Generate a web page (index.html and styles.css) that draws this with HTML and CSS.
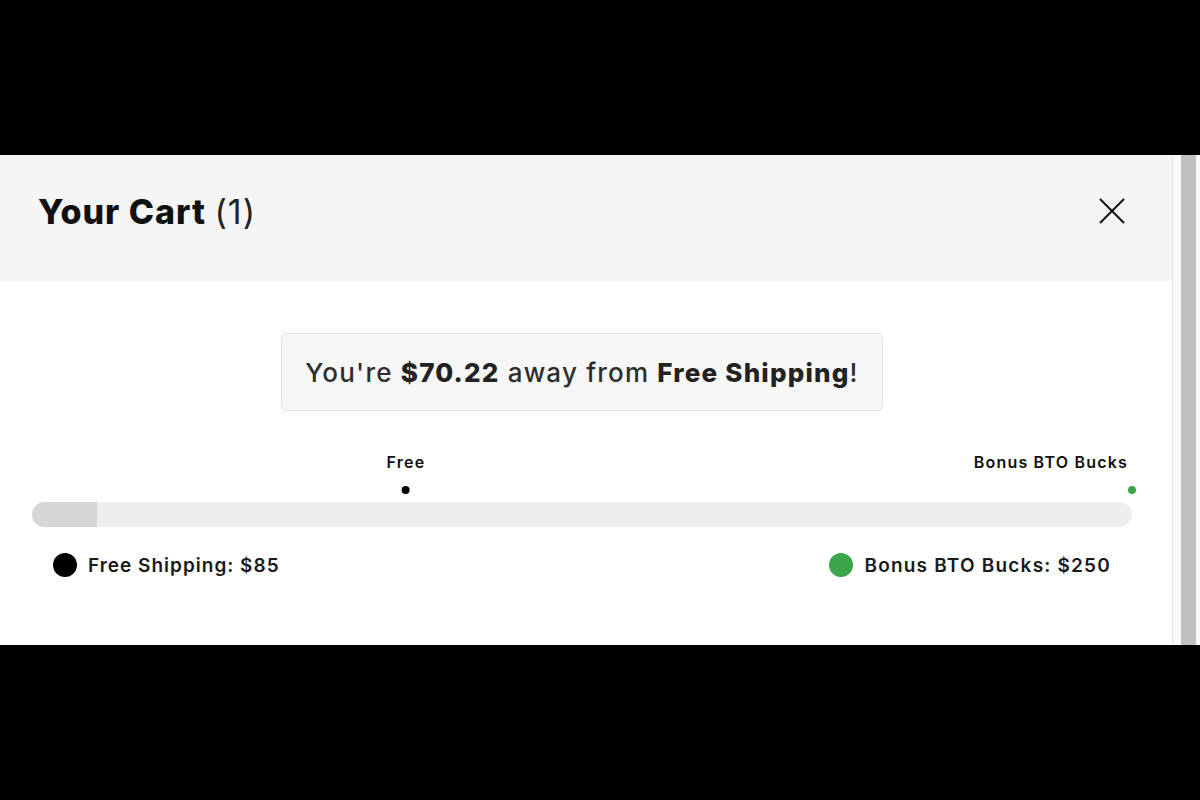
FILE: index.html
```html
<!DOCTYPE html>
<html lang="en">
<head>
    <meta charset="UTF-8">
    <title>Your Cart</title>
    <link rel="stylesheet" href="styles.css">
</head>
<body>
<div class="drawer">
    <div class="drawer-main">
        <div class="cart-head">
            <h2 class="cart-title">Your Cart <span class="count">(1)</span></h2>
            <a class="close" href="javascript:;">
                <svg width="28" height="28" viewBox="0 0 28 28"><path d="M2 2L26 26M26 2L2 26" stroke="#111" stroke-width="2" fill="none"/></svg>
            </a>
        </div>
        <div class="cart-body">
            <div class="notice"><p>You're <b>$70.22</b> away from <b>Free Shipping</b>!</p></div>
            <div class="progress">
                <div class="markers">
                    <div class="marker" style="left:34%">
                        <span class="marker-label">Free</span>
                        <i class="pip"></i>
                    </div>
                    <div class="marker marker-end">
                        <span class="marker-label">Bonus BTO Bucks</span>
                        <i class="pip pip-green"></i>
                    </div>
                </div>
                <div class="track"><div class="fill" style="width:5.9%"></div></div>
                <ul class="legend">
                    <li><i class="dot"></i>Free Shipping: $85</li>
                    <li><i class="dot dot-green"></i>Bonus BTO Bucks: $250</li>
                </ul>
            </div>
        </div>
    </div>
    <div class="scrollbar"><div class="thumb"></div></div>
</div>
</body>
</html>
```
FILE: styles.css
```css
/* reset */
body,h2,p,ul,li{margin:0;padding:0}
ul{list-style:none}
a{text-decoration:none}
body{
    background:#000;
    font-family:Inter, "Liberation Sans", sans-serif;
    color:#111;
    padding:155px 0;
}
.drawer{
    height:490px;
    display:flex;
    background:#fff;
}
.drawer-main{
    flex:1;
    border-right:1px solid #e6e6e6;
}
.scrollbar{
    width:27px;
    padding:0 4px 0 8px;
    box-sizing:border-box;
    background:#fafafa;
    display:flex;
}
.thumb{
    flex:1;
    background:#c1c1c1;
}
.cart-head{
    height:126px;
    box-sizing:border-box;
    background:#f5f5f5;
    display:flex;
    align-items:center;
    justify-content:space-between;
    padding:0 46px 14px 38px;
}
.cart-title{
    font-size:34px;
    font-weight:800;
    letter-spacing:1px;
}
.count{
    font-weight:400;
    color:#222;
    letter-spacing:1px;
}
.close{
    display:flex;
}
.cart-body{
    padding:52px 40px 0 32px;
}
.notice{
    width:602px;
    height:78px;
    box-sizing:border-box;
    margin:0 auto;
    border:1px solid #e3e3e3;
    border-radius:5px;
    background:#f7f7f7;
    display:flex;
    align-items:center;
    justify-content:center;
    font-size:26px;
    font-weight:500;
    color:#2e2e2e;
    letter-spacing:1.2px;
}
.notice b{
    font-weight:800;
    color:#222;
}
.progress{
    margin-top:42px;
}
.markers{
    position:relative;
    height:49px;
}
.marker{
    position:absolute;
    top:0;
    transform:translateX(-50%);
    display:flex;
    flex-direction:column;
    align-items:center;
    gap:15px;
}
.marker-end{
    right:-4px;
    transform:none;
    align-items:flex-end;
}
.marker-end .marker-label{
    margin-right:8px;
}
.marker-label{
    font-size:16px;
    font-weight:600;
    line-height:18px;
    letter-spacing:1.2px;
}
.pip{
    width:8px;
    height:8px;
    border-radius:50%;
    background:#000;
}
.pip-green{
    background:#3ba64a;
}
.track{
    height:25px;
    border-radius:13px;
    background:#eeeeee;
    overflow:hidden;
}
.fill{
    height:100%;
    background:#d6d6d6;
}
.legend{
    display:flex;
    justify-content:space-between;
    padding:26px 21px 0 21px;
}
.legend li{
    display:flex;
    align-items:center;
    gap:11px;
    font-size:19px;
    font-weight:600;
    color:#1a1a1a;
    letter-spacing:1px;
}
.legend li:last-child{
    letter-spacing:1.2px;
}
.dot{
    width:24px;
    height:24px;
    border-radius:50%;
    background:#000;
}
.dot-green{
    background:#3ba64a;
}
```
